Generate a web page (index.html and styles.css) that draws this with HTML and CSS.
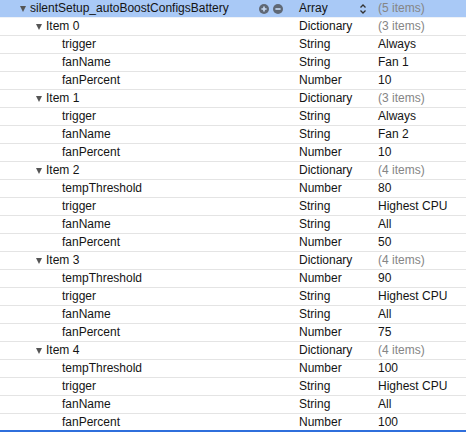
FILE: index.html
```html
<!DOCTYPE html>
<html>
<head>
<meta charset="utf-8">
<link rel="stylesheet" href="styles.css">
</head>
<body>
<div class="plist">
  <div class="row root">
    <div class="key lvl0"><span class="tri"></span><span class="name">silentSetup_autoBoostConfigsBattery</span>
      <span class="btns">
        <svg class="btn" viewBox="0 0 10 10" width="10" height="10"><circle cx="5" cy="5" r="5" fill="#5f6875"/><path d="M2.4 5H7.6M5 2.4V7.6" stroke="#c9dbf5" stroke-width="1.6"/></svg>
        <svg class="btn" viewBox="0 0 10 10" width="10" height="10"><circle cx="5" cy="5" r="5" fill="#5f6875"/><path d="M2.4 5H7.6" stroke="#c9dbf5" stroke-width="1.6"/></svg>
      </span>
    </div>
    <div class="type">Array<svg class="chev" viewBox="0 0 8 12" width="8" height="12"><path d="M1.5 4.5L4 2L6.5 4.5M1.5 7.5L4 10L6.5 7.5" fill="none" stroke="#333" stroke-width="1.3"/></svg></div>
    <div class="val dim">(5 items)</div>
  </div>

  <div class="row"><div class="key lvl1"><span class="tri"></span>Item 0</div><div class="type">Dictionary</div><div class="val dim">(3 items)</div></div>
  <div class="row"><div class="key lvl2">trigger</div><div class="type">String</div><div class="val">Always</div></div>
  <div class="row"><div class="key lvl2">fanName</div><div class="type">String</div><div class="val">Fan 1</div></div>
  <div class="row"><div class="key lvl2">fanPercent</div><div class="type">Number</div><div class="val">10</div></div>

  <div class="row"><div class="key lvl1"><span class="tri"></span>Item 1</div><div class="type">Dictionary</div><div class="val dim">(3 items)</div></div>
  <div class="row"><div class="key lvl2">trigger</div><div class="type">String</div><div class="val">Always</div></div>
  <div class="row"><div class="key lvl2">fanName</div><div class="type">String</div><div class="val">Fan 2</div></div>
  <div class="row"><div class="key lvl2">fanPercent</div><div class="type">Number</div><div class="val">10</div></div>

  <div class="row"><div class="key lvl1"><span class="tri"></span>Item 2</div><div class="type">Dictionary</div><div class="val dim">(4 items)</div></div>
  <div class="row"><div class="key lvl2">tempThreshold</div><div class="type">Number</div><div class="val">80</div></div>
  <div class="row"><div class="key lvl2">trigger</div><div class="type">String</div><div class="val">Highest CPU</div></div>
  <div class="row"><div class="key lvl2">fanName</div><div class="type">String</div><div class="val">All</div></div>
  <div class="row"><div class="key lvl2">fanPercent</div><div class="type">Number</div><div class="val">50</div></div>

  <div class="row"><div class="key lvl1"><span class="tri"></span>Item 3</div><div class="type">Dictionary</div><div class="val dim">(4 items)</div></div>
  <div class="row"><div class="key lvl2">tempThreshold</div><div class="type">Number</div><div class="val">90</div></div>
  <div class="row"><div class="key lvl2">trigger</div><div class="type">String</div><div class="val">Highest CPU</div></div>
  <div class="row"><div class="key lvl2">fanName</div><div class="type">String</div><div class="val">All</div></div>
  <div class="row"><div class="key lvl2">fanPercent</div><div class="type">Number</div><div class="val">75</div></div>

  <div class="row"><div class="key lvl1"><span class="tri"></span>Item 4</div><div class="type">Dictionary</div><div class="val dim">(4 items)</div></div>
  <div class="row"><div class="key lvl2">tempThreshold</div><div class="type">Number</div><div class="val">100</div></div>
  <div class="row"><div class="key lvl2">trigger</div><div class="type">String</div><div class="val">Highest CPU</div></div>
  <div class="row"><div class="key lvl2">fanName</div><div class="type">String</div><div class="val">All</div></div>
  <div class="row last"><div class="key lvl2">fanPercent</div><div class="type">Number</div><div class="val">100</div></div>
</div>
</body>
</html>
```

FILE: styles.css
```css
html, body {
  margin: 0;
  padding: 0;
  background: #ffffff;
}
body {
  width: 466px;
  height: 432px;
  overflow: hidden;
  font-family: "Liberation Sans", Arial, sans-serif;
  font-size: 12px;
  color: #141414;
}
.plist {
  display: flex;
  flex-direction: column;
}
.row {
  display: grid;
  grid-template-columns: 299px 79px 1fr;
  height: 18px;
  box-sizing: border-box;
  border-bottom: 1px solid #e4e4e4;
  align-items: center;
  line-height: 17px;
}
.row.root {
  background: #a9c9f6;
  border-bottom: 1px solid #eef2f8;
}
.row.last {
  border-bottom: 2px solid #2f6fdc;
}
.key {
  display: flex;
  align-items: center;
  white-space: nowrap;
}
.lvl0 { padding-left: 20px; }
.lvl1 { padding-left: 36px; }
.lvl2 { padding-left: 62px; }
.tri {
  width: 0;
  height: 0;
  border-left: 3.5px solid transparent;
  border-right: 3.5px solid transparent;
  border-top: 6px solid #555555;
  margin-right: 4px;
}
.btns {
  display: flex;
  gap: 4px;
  margin-left: auto;
  margin-right: 16px;
}
.btn {
  display: block;
}
.type {
  display: flex;
  align-items: center;
  white-space: nowrap;
}
.chev {
  margin-left: auto;
  margin-right: 11px;
}
.val {
  white-space: nowrap;
}
.dim {
  color: #858585;
}
```
